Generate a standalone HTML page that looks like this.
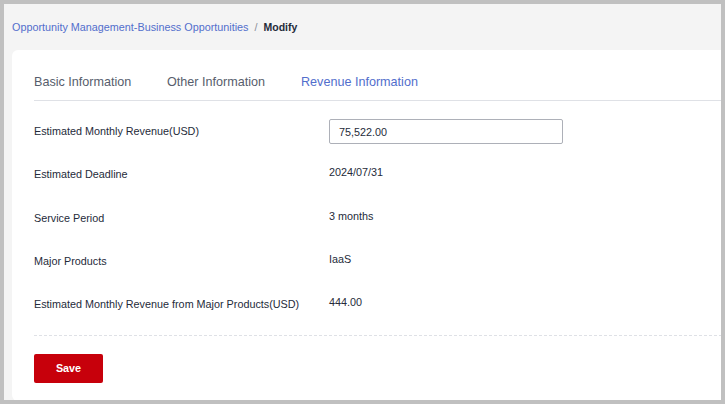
<!DOCTYPE html>
<html><head><meta charset="utf-8">
<style>
*{margin:0;padding:0;box-sizing:border-box}
html,body{width:725px;height:404px;overflow:hidden;background:#c0c0c0}
body{position:relative;font-family:"Liberation Sans",sans-serif}
#frame{position:absolute;left:4px;top:4px;width:717px;height:396px;background:#f4f4f4;overflow:hidden}
.abs{position:absolute;white-space:nowrap;line-height:1}
#crumb{left:8px;top:18px;font-size:10.8px;color:#526ecc}
#crumb .sep{color:#8a8e99;margin:0 6px}
#crumb b{color:#252b3a;font-size:10.5px}
#card{position:absolute;left:8px;top:46px;width:760px;height:351px;background:#fff;border-radius:6px}
.tab{font-size:13.3px;color:#575d6c;top:25px;transform:scaleX(0.947);transform-origin:0 0}
.tab.active{color:#526ecc}
#tabline{position:absolute;left:22px;right:0;top:50px;height:1px;background:#dfe1e6}
.lbl{font-size:10.8px;color:#252b3a;left:22px}
.val{font-size:10.8px;color:#252b3a;left:317px}
#inp{position:absolute;left:317px;top:69px;width:234px;height:25px;border:1px solid #adb0b8;border-radius:2px}
#inp span{position:absolute;left:9px;top:7px;font-size:10.8px;color:#252b3a;line-height:1}
#dash{position:absolute;left:22px;right:0;top:285px;height:1px;background-image:linear-gradient(to right,#dfe1e6 3px,transparent 3px);background-size:5px 1px}
#save{position:absolute;left:22px;top:304px;width:69px;height:29px;background:#c7000b;border-radius:2px;color:#fff;font-weight:bold;font-size:10.8px;text-align:center;line-height:29px}
</style></head><body>
<div id="frame">
  <div id="crumb" class="abs">Opportunity Management-Business Opportunities<span class="sep">/</span><b>Modify</b></div>
  <div id="card">
    <div class="abs tab" style="left:22px">Basic Information</div>
    <div class="abs tab" style="left:155px">Other Information</div>
    <div class="abs tab active" style="left:289px">Revenue Information</div>
    <div id="tabline"></div>
    <div class="abs lbl" style="top:76px">Estimated Monthly Revenue(USD)</div>
    <div id="inp"><span>75,522.00</span></div>
    <div class="abs lbl" style="top:119px">Estimated Deadline</div>
    <div class="abs val" style="top:117px">2024/07/31</div>
    <div class="abs lbl" style="top:163px">Service Period</div>
    <div class="abs val" style="top:161px">3 months</div>
    <div class="abs lbl" style="top:206px">Major Products</div>
    <div class="abs val" style="top:204px">IaaS</div>
    <div class="abs lbl" style="top:249px">Estimated Monthly Revenue from Major Products(USD)</div>
    <div class="abs val" style="top:247px">444.00</div>
    <div id="dash"></div>
    <div id="save">Save</div>
  </div>
</div>
</body></html>
